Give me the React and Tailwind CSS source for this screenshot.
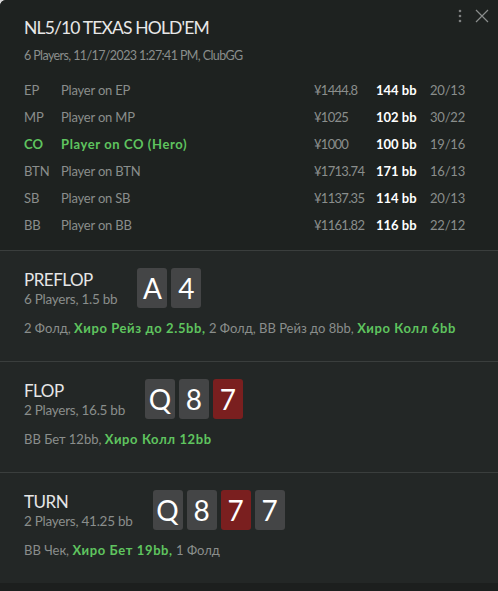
import React from "react";

const players = [
  { pos: "EP", name: "Player on EP", money: "¥1444.8", bb: "144 bb", st: "20/13" },
  { pos: "MP", name: "Player on MP", money: "¥1025", bb: "102 bb", st: "30/22" },
  { pos: "CO", name: "Player on CO (Hero)", money: "¥1000", bb: "100 bb", st: "19/16", hero: true },
  { pos: "BTN", name: "Player on BTN", money: "¥1713.74", bb: "171 bb", st: "16/13" },
  { pos: "SB", name: "Player on SB", money: "¥1137.35", bb: "114 bb", st: "20/13" },
  { pos: "BB", name: "Player on BB", money: "¥1161.82", bb: "116 bb", st: "22/12" },
];

function Card({ v, red }) {
  return (
    <div
      className={`w-[30px] h-[40px] rounded-[3px] flex items-center justify-center text-[28px] leading-none text-white ${
        red ? "bg-[#7a1f1f]" : "bg-[#444546]"
      }`}
    >
      {v}
    </div>
  );
}

function Street({ title, sub, cards, children }) {
  return (
    <div className="bg-[#232726] px-6 pt-[16px] h-[111px] border-t border-[#3a3e3d]">
      <div className="flex items-center gap-5">
        <div className="pt-[3px]">
          <div className="text-[17px] tracking-[-0.5px] leading-[20px] text-[#e6e6e6]">{title}</div>
          <div className="text-[13.5px] tracking-[-0.25px] leading-[18px] text-[#8a8e8c]">{sub}</div>
        </div>
        <div className="flex gap-[4px]">
          {cards.map((c, i) => (
            <Card key={i} v={c.v} red={c.red} />
          ))}
        </div>
      </div>
      <div className="mt-[11px] text-[13px] leading-[18px] text-[#8a8e8c]">{children}</div>
    </div>
  );
}

const G = ({ children }) => <span className="text-[#5fc45f] font-bold tracking-[0.6px]">{children}</span>;

export default function App() {
  return (
    <div className="w-[498px] h-[591px] bg-[#d9d9d9] overflow-hidden" style={{ fontFamily: "Lato, 'Noto Sans', sans-serif" }}>
      <div className="w-full h-full bg-[#1c1f1e] rounded-tl-[6px] flex flex-col overflow-hidden">
        <div className="relative bg-[#1e2220] h-[250px] px-6 pt-[16px]">
          <div className="absolute right-[8px] top-[8px] flex items-center gap-[12px]">
            <svg width="4" height="14" viewBox="0 0 4 14">
              <circle cx="2" cy="2" r="1.3" fill="#7d807f" />
              <circle cx="2" cy="7" r="1.3" fill="#7d807f" />
              <circle cx="2" cy="12" r="1.3" fill="#7d807f" />
            </svg>
            <svg width="16" height="16" viewBox="0 0 16 16">
              <path d="M2 2 L14 14 M14 2 L2 14" stroke="#8a8d8c" strokeWidth="1.2" />
            </svg>
          </div>
          <div className="text-[17.5px] tracking-[-0.85px] leading-[24px] text-[#e8e8e8]">NL5/10 TEXAS HOLD'EM</div>
          <div className="mt-[7px] text-[12.5px] tracking-[-0.6px] leading-[18px] text-[#8a8e8c]">6 Players, 11/17/2023 1:27:41 PM, ClubGG</div>
          <div className="mt-[12px] grid grid-cols-[37px_253px_62px_54px_1fr] text-[13px]">
            {players.map((p) => (
              <React.Fragment key={p.pos}>
                <div className={`h-[27px] flex items-center ${p.hero ? "text-[#5fc45f] font-bold" : "text-[#8a8e8c] tracking-[-0.1px]"}`}>{p.pos}</div>
                <div className={`h-[27px] flex items-center ${p.hero ? "text-[#5fc45f] font-bold tracking-[0.6px]" : "text-[#8a8e8c] tracking-[-0.2px]"}`}>{p.name}</div>
                <div className="h-[27px] flex items-center text-[#8a8e8c] tracking-[-0.7px]">{p.money}</div>
                <div className="h-[27px] flex items-center text-white font-bold">{p.bb}</div>
                <div className="h-[27px] flex items-center text-[#8a8e8c] tracking-[-0.2px]">{p.st}</div>
              </React.Fragment>
            ))}
          </div>
        </div>
        <Street title="PREFLOP" sub="6 Players, 1.5 bb" cards={[{ v: "A" }, { v: "4" }]}>
          2 Фолд, <G>Хиро Рейз до 2.5bb,</G> 2 Фолд, BB Рейз до 8bb, <G>Хиро Колл 6bb</G>
        </Street>
        <Street title="FLOP" sub="2 Players, 16.5 bb" cards={[{ v: "Q" }, { v: "8" }, { v: "7", red: true }]}>
          BB Бет 12bb, <G>Хиро Колл 12bb</G>
        </Street>
        <Street title="TURN" sub="2 Players, 41.25 bb" cards={[{ v: "Q" }, { v: "8" }, { v: "7", red: true }, { v: "7" }]}>
          BB Чек, <G>Хиро Бет 19bb,</G> 1 Фолд
        </Street>
        <div className="flex-1 bg-[#1c1f1e]" />
      </div>
    </div>
  );
}
